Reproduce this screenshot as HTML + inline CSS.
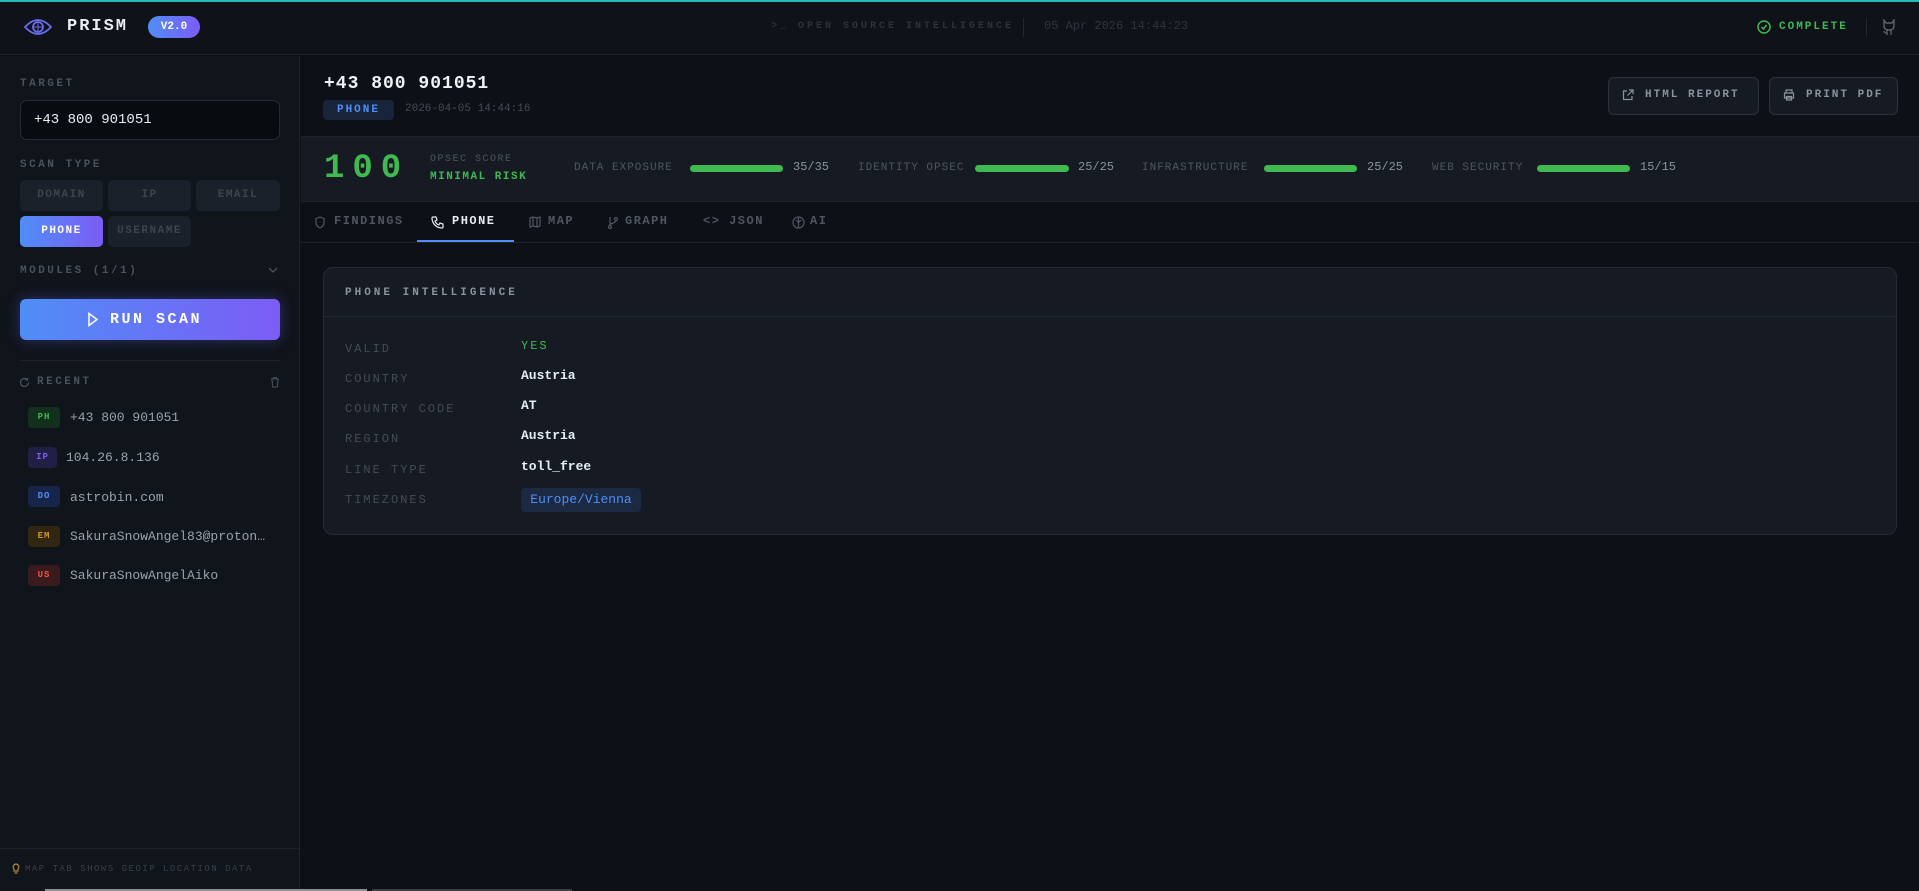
<!DOCTYPE html>
<html><head><meta charset="utf-8"><style>
*{box-sizing:border-box;margin:0;padding:0}
body{width:1919px;height:891px;overflow:hidden;background:#0d1117;font-family:"Liberation Mono",monospace;color:#c9d1d9;position:relative}
.a{position:absolute;white-space:nowrap}
.px{font-family:"Liberation Mono",monospace;font-weight:bold;text-transform:uppercase;letter-spacing:2px}
.lbl{color:#4b525c;font-size:11px;letter-spacing:2.5px}
.hdr{left:0;top:0;width:1919px;height:55px;background:#0f1219;border-bottom:1px solid #1e232b;border-top:2px solid #2bb6b8}
.side{left:0;top:56px;width:300px;height:835px;background:#10141b;border-right:1px solid #1e232b}
.btn{position:absolute;background:#1b212b;border-radius:5px;color:#3d4450;font-size:11px;text-align:center;font-weight:bold;letter-spacing:1.5px;line-height:31px}
.badge{position:absolute;left:28px;width:32px;height:21px;border-radius:4px;font-size:9px;font-weight:bold;text-align:center;line-height:21px;letter-spacing:1px}
.ri{position:absolute;left:70px;font-size:13px;color:#9aa2ad}
.bar{position:absolute;height:7px;border-radius:4px;background:#3fb950;top:165px}
.sl{position:absolute;top:162px;font-size:11px;color:#4f5661;letter-spacing:1px}
.sv{position:absolute;top:160px;font-size:12px;color:#8b939e}
.tab{position:absolute;top:214px;font-size:12px;color:#4f5661;letter-spacing:1.5px;font-weight:bold}
.rl{position:absolute;left:345px;font-size:12px;color:#454b55;letter-spacing:2px}
.rv{position:absolute;left:521px;font-size:13px;color:#e6edf3;font-weight:bold}
</style></head><body>
<div class="a hdr"></div>
<svg class="a" style="left:23px;top:15px" width="30" height="24" viewBox="0 0 30 24" fill="none" stroke="#6a6cf0" stroke-width="1.8"><path d="M2 12 Q15 -2 28 12 Q15 26 2 12Z"/><circle cx="15" cy="12" r="5"/><path d="M15 7v10M10 12h10" stroke-width="1"/></svg>
<div class="a px" style="left:67px;top:17px;font-size:17px;color:#e6edf3;letter-spacing:2px">PRISM</div>
<div class="a" style="left:148px;top:16px;width:52px;height:22px;border-radius:11px;background:linear-gradient(90deg,#4f8ef7,#7c5cf5);color:#fff;font-size:11px;font-weight:bold;text-align:center;line-height:22px">V2.0</div>
<div class="a px" style="left:771px;top:21px;font-size:10px;color:#2d333c;letter-spacing:3px">&gt;_ OPEN SOURCE INTELLIGENCE</div>
<div class="a" style="left:1023px;top:18px;width:1px;height:19px;background:#222831"></div>
<div class="a" style="left:1044px;top:19px;font-size:12px;color:#2f353e">05 Apr 2026 14:44:23</div>
<svg class="a" style="left:1757px;top:20px" width="14" height="14" viewBox="0 0 14 14" fill="none" stroke="#3fb950" stroke-width="1.5"><circle cx="7" cy="7" r="6"/><path d="M4.5 7l2 2 3-4"/></svg>
<div class="a px" style="left:1779px;top:21px;font-size:11px;color:#3fb950;letter-spacing:2px">COMPLETE</div>
<div class="a" style="left:1866px;top:18px;width:1px;height:19px;background:#222831"></div>
<svg class="a" style="left:1882px;top:19px" width="14" height="17" viewBox="0 0 14 17" fill="none" stroke="#5a616b" stroke-width="1.4"><path d="M2 1l2 3h6l2-3v6c0 3-2 4-5 4s-5-1-5-4z M5 11v5 M9 11v5 M5 14c-2 0-3-1-3-2"/></svg>

<div class="a side"></div>
<div class="a px lbl" style="left:20px;top:78px">TARGET</div>
<div class="a" style="left:20px;top:100px;width:260px;height:40px;border:1px solid #252b35;border-radius:7px;background:#080b10"></div>
<div class="a" style="left:34px;top:112px;font-size:14px;color:#e6edf3">+43 800 901051</div>
<div class="a px lbl" style="left:20px;top:159px">SCAN TYPE</div>
<div class="btn" style="left:20px;top:180px;width:83px">DOMAIN</div>
<div class="btn" style="left:108px;top:180px;width:83px">IP</div>
<div class="btn" style="left:196px;top:180px;width:84px">EMAIL</div>
<div class="btn" style="left:20px;top:216px;width:83px;background:linear-gradient(90deg,#4f8ef7,#7c5cf5);color:#fff">PHONE</div>
<div class="btn" style="left:108px;top:216px;width:83px">USERNAME</div>
<div class="a px lbl" style="left:20px;top:265px">MODULES (1/1)</div>
<svg class="a" style="left:268px;top:266px" width="10" height="8" viewBox="0 0 10 8" fill="none" stroke="#4b525c" stroke-width="1.3"><path d="M1 2l4 4 4-4"/></svg>
<div class="a" style="left:20px;top:299px;width:260px;height:41px;border-radius:6px;background:linear-gradient(90deg,#4f8ef7,#7c5cf5);box-shadow:0 0 14px rgba(100,110,245,.35)"></div>
<svg class="a" style="left:87px;top:312px" width="12" height="15" viewBox="0 0 12 15" fill="none" stroke="#fff" stroke-width="1.5"><path d="M2 1.5l8 6-8 6z"/></svg>
<div class="a px" style="left:110px;top:311px;font-size:15px;color:#fff;letter-spacing:2.5px">RUN SCAN</div>
<div class="a" style="left:20px;top:360px;width:260px;height:1px;background:#1e232b"></div>
<svg class="a" style="left:19px;top:377px" width="11" height="11" viewBox="0 0 11 11" fill="none" stroke="#4b525c" stroke-width="1.3"><path d="M9.5 5.5a4 4 0 1 1-1.2-2.9M8.5 1v2h-2"/></svg>
<div class="a px lbl" style="left:37px;top:376px">RECENT</div>
<svg class="a" style="left:270px;top:376px" width="10" height="12" viewBox="0 0 10 12" fill="none" stroke="#4b525c" stroke-width="1.1"><path d="M1 3h8M3.5 3V1.5h3V3M2 3l.6 8h4.8L8 3"/></svg>
<div class="badge" style="top:407px;background:#12301c;color:#3fb950">PH</div><div class="ri" style="top:410px">+43 800 901051</div>
<div class="badge" style="top:447px;background:#211f45;color:#7c5cf5;width:29px">IP</div><div class="ri" style="top:450px;left:66px">104.26.8.136</div>
<div class="badge" style="top:486px;background:#18254a;color:#4f8ef7">DO</div><div class="ri" style="top:490px">astrobin.com</div>
<div class="badge" style="top:526px;background:#302612;color:#d29922">EM</div><div class="ri" style="top:529px">SakuraSnowAngel83@proton…</div>
<div class="badge" style="top:565px;background:#3a1a1c;color:#f85149">US</div><div class="ri" style="top:568px">SakuraSnowAngelAiko</div>
<div class="a" style="left:0;top:848px;width:300px;height:1px;background:#1e232b"></div>
<svg class="a" style="left:12px;top:863px" width="8" height="12" viewBox="0 0 8 12" fill="none" stroke="#b08a2a" stroke-width="1.2"><path d="M4 1a3 3 0 0 1 2 5v2H2V6a3 3 0 0 1 2-5zM2.5 10h3"/></svg>
<div class="a px" style="left:25px;top:864px;font-size:9px;color:#3a4049;letter-spacing:1.5px;font-weight:normal">MAP TAB SHOWS GEOIP LOCATION DATA</div>
<div class="a" style="left:45px;top:889px;width:322px;height:2px;background:#8a8f96"></div>
<div class="a" style="left:372px;top:889px;width:200px;height:2px;background:#3a3d42"></div>

<div class="a px" style="left:324px;top:74px;font-size:18px;color:#f0f3f6;letter-spacing:1px">+43 800 901051</div>
<div class="a" style="left:323px;top:100px;width:71px;height:20px;border-radius:4px;background:#18243a;color:#4f8ef7;font-size:11px;font-weight:bold;letter-spacing:2px;text-align:center;line-height:20px">PHONE</div>
<div class="a" style="left:405px;top:103px;font-size:11px;color:#454b55">2026-04-05 14:44:16</div>
<div class="a" style="left:1608px;top:77px;width:151px;height:38px;border:1px solid #2c323c;border-radius:6px;background:#161a22"></div>
<svg class="a" style="left:1622px;top:89px" width="12" height="12" viewBox="0 0 12 12" fill="none" stroke="#8b939e" stroke-width="1.2"><path d="M5 2H1.5v8.5H10V7M7 1h4v4M11 1L5.5 6.5"/></svg>
<div class="a px" style="left:1645px;top:89px;font-size:11px;color:#8b939e">HTML REPORT</div>
<div class="a" style="left:1769px;top:77px;width:129px;height:38px;border:1px solid #2c323c;border-radius:6px;background:#161a22"></div>
<svg class="a" style="left:1783px;top:89px" width="12" height="12" viewBox="0 0 12 12" fill="none" stroke="#8b939e" stroke-width="1.2"><path d="M3 4V1h6v3M1.5 4h9v5h-9zM3.5 7.5h5V11h-5z"/></svg>
<div class="a px" style="left:1806px;top:89px;font-size:11px;color:#8b939e">PRINT PDF</div>

<div class="a" style="left:301px;top:136px;width:1618px;height:66px;background:#161a22;border-top:1px solid #1e232b;border-bottom:1px solid #1e232b"></div>
<div class="a" style="left:324px;top:150px;font-size:34px;font-weight:bold;color:#3fb950;letter-spacing:8px">100</div>
<div class="a" style="left:430px;top:154px;font-size:10px;color:#4f5661;letter-spacing:1.5px">OPSEC SCORE</div>
<div class="a px" style="left:430px;top:171px;font-size:11px;color:#3fb950;letter-spacing:1.5px">MINIMAL RISK</div>
<div class="sl" style="left:574px">DATA EXPOSURE</div><div class="bar" style="left:690px;width:93px"></div><div class="sv" style="left:793px">35/35</div>
<div class="sl" style="left:858px">IDENTITY OPSEC</div><div class="bar" style="left:975px;width:94px"></div><div class="sv" style="left:1078px">25/25</div>
<div class="sl" style="left:1142px">INFRASTRUCTURE</div><div class="bar" style="left:1264px;width:93px"></div><div class="sv" style="left:1367px">25/25</div>
<div class="sl" style="left:1432px">WEB SECURITY</div><div class="bar" style="left:1537px;width:93px"></div><div class="sv" style="left:1640px">15/15</div>

<div class="a" style="left:301px;top:242px;width:1618px;height:1px;background:#1e232b"></div>
<svg class="a" style="left:315px;top:216px" width="10" height="13" viewBox="0 0 10 13" fill="none" stroke="#4f5661" stroke-width="1.2"><path d="M5 1l4 1.5v4C9 9.5 7 11 5 12 3 11 1 9.5 1 6.5v-4z"/></svg>
<div class="tab" style="left:334px">FINDINGS</div>
<svg class="a" style="left:431px;top:216px" width="13" height="13" viewBox="0 0 13 13" fill="none" stroke="#e6edf3" stroke-width="1.2"><path d="M2 1h3l1 3-2 1.2a8 8 0 0 0 3.8 3.8L9 7l3 1v3c0 .6-.5 1-1 1C5.5 12 1 7.5 1 2c0-.5.4-1 1-1z"/></svg>
<div class="tab" style="left:452px;color:#e6edf3">PHONE</div>
<div class="a" style="left:417px;top:240px;width:97px;height:2px;background:#4f8ef7"></div>
<svg class="a" style="left:529px;top:216px" width="12" height="12" viewBox="0 0 12 12" fill="none" stroke="#4f5661" stroke-width="1.2"><path d="M1 2l3-1 4 1 3-1v9l-3 1-4-1-3 1zM4 1v9M8 2v9"/></svg>
<div class="tab" style="left:548px">MAP</div>
<svg class="a" style="left:607px;top:216px" width="12" height="13" viewBox="0 0 12 13" fill="none" stroke="#4f5661" stroke-width="1.2"><circle cx="3" cy="11" r="1.5"/><circle cx="9" cy="3" r="1.5"/><path d="M3 1v8.5M9 4.5c0 3-6 2-6 5"/></svg>
<div class="tab" style="left:625px">GRAPH</div>
<div class="tab" style="left:703px">&lt;&gt; JSON</div>
<svg class="a" style="left:792px;top:216px" width="13" height="13" viewBox="0 0 13 13" fill="none" stroke="#4f5661" stroke-width="1.2"><circle cx="6.5" cy="6.5" r="5.5"/><path d="M6.5 1v11M4 4l2.5 2.5L9 4"/></svg>
<div class="tab" style="left:810px">AI</div>

<div class="a" style="left:323px;top:267px;width:1574px;height:268px;border:1px solid #252b35;border-radius:10px;background:#161a22"></div>
<div class="a" style="left:324px;top:316px;width:1572px;height:1px;background:#232932"></div>
<div class="a px" style="left:345px;top:287px;font-size:11px;color:#8b939e;letter-spacing:3px">PHONE INTELLIGENCE</div>
<div class="rl" style="top:342px">VALID</div><div class="rv" style="top:339px;color:#3fb950;font-weight:normal;letter-spacing:2px;font-size:12px">YES</div>
<div class="rl" style="top:372px">COUNTRY</div><div class="rv" style="top:368px">Austria</div>
<div class="rl" style="top:402px">COUNTRY CODE</div><div class="rv" style="top:398px">AT</div>
<div class="rl" style="top:432px">REGION</div><div class="rv" style="top:428px">Austria</div>
<div class="rl" style="top:463px">LINE TYPE</div><div class="rv" style="top:459px">toll_free</div>
<div class="rl" style="top:493px">TIMEZONES</div>
<div class="a" style="left:521px;top:488px;width:120px;height:24px;border-radius:4px;background:#1b2a42;color:#4f8ef7;font-size:13px;text-align:center;line-height:24px">Europe/Vienna</div>
</body></html>
